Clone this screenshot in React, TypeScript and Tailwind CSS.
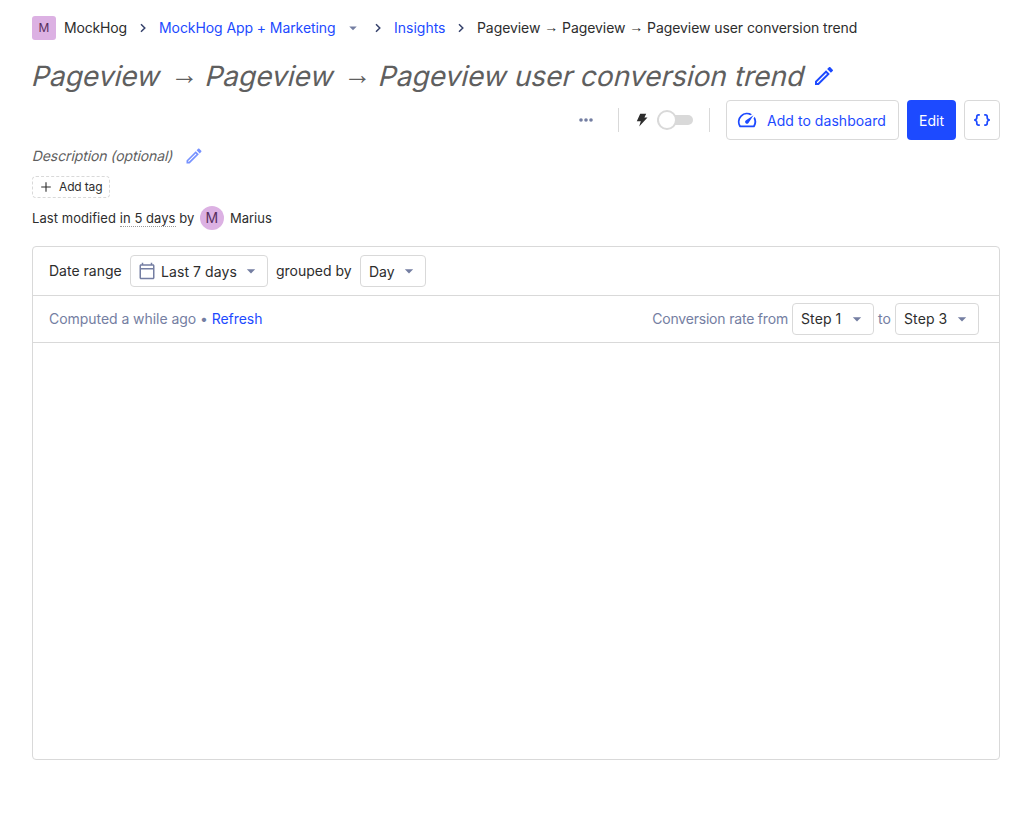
import React from "react";
import {
  MdArrowDropDown,
  MdOutlineEdit,
  MdSpeed,
  MdOutlineCalendarToday,
} from "react-icons/md";

function Chevron() {
  return (
    <svg viewBox="0 0 16 16" className="h-4 w-4 shrink-0" fill="none" stroke="#35416b" strokeWidth="1.5">
      <path d="M6 4.2 9.8 8 6 11.8" />
    </svg>
  );
}

function Arrow({ className = "" }: { className?: string }) {
  return (
    <span className={`inline-block align-[0.08em] font-['Liberation_Sans',sans-serif] leading-none ${className}`}>→</span>
  );
}

function Select({ label, width, text = "", children }: { label: string; width: string; text?: string; children?: React.ReactNode }) {
  return (
    <button className={`flex h-8 shrink-0 items-center rounded border border-[#d9d9d9] bg-white pl-2 pr-1.5 ${width}`}>
      {children}
      <span className={`whitespace-nowrap ${text}`}>{label}</span>
      <MdArrowDropDown className="ml-auto h-5 w-5 text-[#747ea2]" />
    </button>
  );
}

export default function App() {
  return (
    <div className="h-[840px] w-[1032px] overflow-hidden bg-white px-8 pt-4 font-['Inter',sans-serif] text-sm text-[#2d2d2d]">
      <nav className="flex h-6 items-center whitespace-nowrap">
        <div className="flex h-6 w-6 items-center justify-center rounded-[3px] bg-[#dcb1e3] text-xs text-[#572e5e]">M</div>
        <span className="ml-2 w-[63px] tracking-[-0.18px]">MockHog</span>
        <span className="mx-2"><Chevron /></span>
        <a className="w-[177px] tracking-[-0.08px] text-[#1d4aff]">MockHog App + Marketing</a>
        <MdArrowDropDown className="ml-2 h-[18px] w-[18px] text-[#747ea2]" />
        <span className="mx-2"><Chevron /></span>
        <a className="w-[51px] text-[#1d4aff]">Insights</a>
        <span className="mx-2"><Chevron /></span>
        <span className="tracking-[-0.07px]">Pageview <Arrow /> Pageview <Arrow /> Pageview user conversion trend</span>
      </nav>

      <div className="mt-4 flex h-10 items-center">
        <h1 className="ml-px w-[769px] -skew-x-[14deg] whitespace-nowrap text-[28px] leading-[38px] tracking-[0.02px] text-[#5f5f5f]">
          Pageview <Arrow className="mx-[0.8px] skew-x-[14deg]" /> Pageview{" "}
          <Arrow className="mx-[0.8px] skew-x-[14deg]" /> Pageview user conversion trend
        </h1>
        <MdOutlineEdit className="ml-2.5 h-6 w-6 text-[#1d4aff]" />
      </div>

      <div className="mt-1 flex h-10 items-center justify-end">
        <svg viewBox="0 0 16 16" className="h-4 w-4" fill="#747ea2">
          <circle cx="3" cy="8" r="1.8" />
          <circle cx="8" cy="8" r="1.8" />
          <circle cx="13" cy="8" r="1.8" />
        </svg>
        <div className="ml-6 h-6 w-px bg-[#d9d9d9]" />
        <svg viewBox="0 0 12 14" className="ml-[17px] h-3.5 w-3" fill="#2d2d2d">
          <path d="M4.2.7h6L8.4 4.6h3.1L3.2 13.4 4.8 8.3H.8Z" />
        </svg>
        <div className="relative ml-[9px] flex h-5 w-9 items-center">
          <div className="h-2.5 w-full rounded-full bg-[#d9d9d9]" />
          <div className="absolute left-0 top-0 h-5 w-5 rounded-full border-2 border-[#d9d9d9] bg-white" />
        </div>
        <div className="ml-4 h-6 w-px bg-[#d9d9d9]" />
        <button className="ml-4 flex h-10 w-[173px] items-center rounded border border-[#d9d9d9] pl-[9px] text-[#1d4aff]">
          <MdSpeed className="h-[22px] w-[22px]" />
          <span className="ml-[9px] whitespace-nowrap pt-0.5 tracking-[0.05px]">Add to dashboard</span>
        </button>
        <button className="ml-2 h-10 w-[49px] rounded bg-[#1d4aff] pt-0.5 text-white">Edit</button>
        <button className="ml-2 flex h-10 w-9 items-center justify-center rounded border border-[#d9d9d9]">
          <svg viewBox="0 0 18 14" className="h-3.5 w-[18px]" fill="none" stroke="#1d4aff" strokeWidth="1.7">
            <path d="M6.8 1.9H5.6Q3.8 1.9 3.8 3.7v1.1Q3.8 6.6 1.2 7q2.6.4 2.6 2.2v1.1Q3.8 12.1 5.6 12.1h1.2M11.2 1.9h1.2q1.8 0 1.8 1.8v1.1q0 1.8 2.6 2.2-2.6.4-2.6 2.2v1.1q0 1.8-1.8 1.8h-1.2" />
          </svg>
        </button>
      </div>

      <div className="mt-1 flex h-6 items-center">
        <span className="ml-px w-[140px] -skew-x-[14deg] whitespace-nowrap tracking-[-0.09px] text-[#5f5f5f]">Description (optional)</span>
        <MdOutlineEdit className="ml-[11px] h-5 w-5 text-[#1d4aff] opacity-60" />
      </div>

      <div className="mt-2 flex h-[22px] w-[78px] items-center rounded border border-dashed border-[#d9d9d9] pl-2 text-xs">
        <svg viewBox="0 0 10 10" className="h-2.5 w-2.5" stroke="#2d2d2d" strokeWidth="1.1">
          <path d="M5 .2v9.6M.2 5h9.6" />
        </svg>
        <span className="ml-2 whitespace-nowrap tracking-[-0.15px]">Add tag</span>
      </div>

      <div className="mt-2 flex h-6 items-center whitespace-nowrap text-[13px] tracking-[0.06px]">
        <span>Last modified&nbsp;</span>
        <span className="border-b border-dotted border-[#999] leading-4">in 5 days</span>
        <span>&nbsp;by</span>
        <span className="ml-[5.5px] flex h-6 w-6 items-center justify-center rounded-full bg-[#dcb1e3] text-sm text-[#572e5e]">M</span>
        <span className="ml-1.5 tracking-normal">Marius</span>
      </div>

      <section className="mt-4 h-[514px] rounded border border-[#d9d9d9]">
        <div className="flex h-12 items-center px-4">
          <span className="w-[73px] whitespace-nowrap">Date range</span>
          <div className="ml-2">
            <Select label="Last 7 days" width="w-[138px]" text="pt-0.5 tracking-[0.08px]">
              <MdOutlineCalendarToday className="-ml-px mr-[5px] h-[18px] w-[18px] text-[#747ea2]" />
            </Select>
          </div>
          <span className="ml-2 w-[76px] whitespace-nowrap">grouped by</span>
          <div className="ml-2"><Select label="Day" width="w-[66px]" text="pt-0.5" /></div>
        </div>
        <div className="flex h-12 items-center justify-between border-y border-[#d9d9d9] pl-4 pr-5 text-[#747ea2]">
          <span className="whitespace-nowrap tracking-[-0.05px]">
            Computed a while ago • <a className="text-[#1d4aff]">Refresh</a>
          </span>
          <div className="flex items-center gap-1 whitespace-nowrap">
            <span className="tracking-[-0.19px]">Conversion rate from</span>
            <div className="text-[#2d2d2d]"><Select label="Step 1" width="w-[82px]" text="tracking-[0.1px]" /></div>
            <span className="w-[13px]">to</span>
            <div className="text-[#2d2d2d]"><Select label="Step 3" width="w-[84px]" text="tracking-[0.1px]" /></div>
          </div>
        </div>
      </section>
    </div>
  );
}
